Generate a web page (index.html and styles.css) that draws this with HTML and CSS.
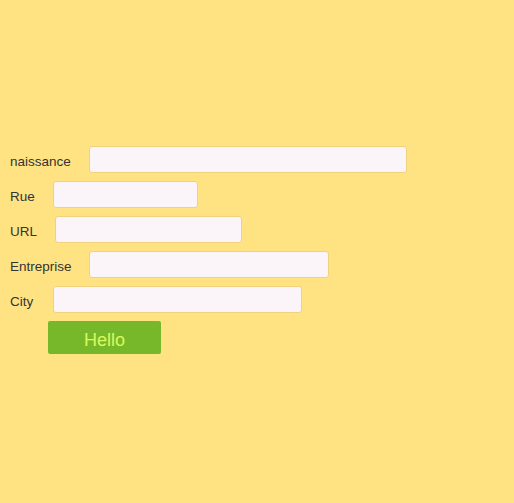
FILE: index.html
```html
<!DOCTYPE html>
<html>
<head>
<meta charset="utf-8">
<link rel="stylesheet" href="styles.css">
</head>
<body>
<form class="form">
  <div class="row"><label class="label">naissance</label><input class="field w-naissance" type="text"></div>
  <div class="row"><label class="label">Rue</label><input class="field w-rue" type="text"></div>
  <div class="row"><label class="label">URL</label><input class="field w-url" type="text"></div>
  <div class="row"><label class="label label-entreprise">Entreprise</label><input class="field w-entreprise" type="text"></div>
  <div class="row"><label class="label label-city">City</label><input class="field w-city" type="text"></div>
  <div class="actions"><button class="btn" type="button">Hello</button></div>
</form>
</body>
</html>
```

FILE: styles.css
```css
html, body {
  margin: 0;
  padding: 0;
  background: #ffe382;
  height: 100%;
}
body {
  font-family: "Liberation Sans", Arial, sans-serif;
  color: #333;
}
.form {
  padding: 146px 0 0 10px;
  display: flex;
  flex-direction: column;
  gap: 8px;
}
.row {
  display: flex;
  align-items: center;
  gap: 18px;
  height: 27px;
}
.label {
  font-size: 13.5px;
  color: #333;
  padding-top: 4px;
}
.label-city {
  margin-right: 2px;
}
.label-entreprise {
  margin-right: -1px;
}
.field {
  box-sizing: border-box;
  height: 27px;
  margin: 0;
  border: 1px solid #f0d27e;
  border-radius: 3px;
  background: #fbf5fa;
  outline: none;
}
.w-naissance { width: 318px; }
.w-rue { width: 145px; }
.w-url { width: 187px; }
.w-entreprise { width: 240px; }
.w-city { width: 249px; }
.actions {
  padding-left: 38px;
}
.btn {
  box-sizing: border-box;
  width: 113px;
  height: 33px;
  border: none;
  border-radius: 2px;
  background: #77b82a;
  color: #d8fa5c;
  font-family: "Liberation Sans", Arial, sans-serif;
  font-size: 18px;
  padding: 5px 0 0 0;
}
```
